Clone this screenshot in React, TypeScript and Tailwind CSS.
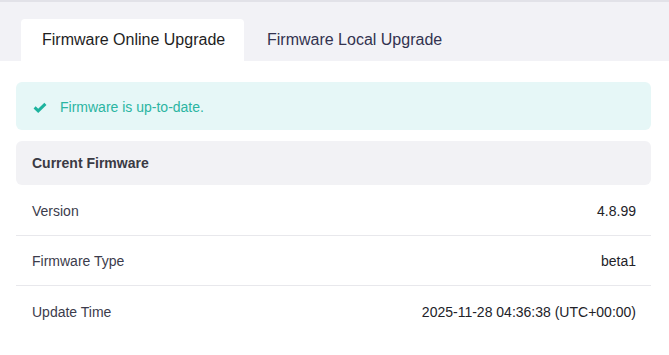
const rows = [
  { label: "Version", value: "4.8.99" },
  { label: "Firmware Type", value: "beta1" },
  { label: "Update Time", value: "2025-11-28 04:36:38 (UTC+00:00)" },
];

const CheckIcon = () => (
  <svg width="14" height="11" viewBox="0 0 14 11" fill="none">
    <path d="M1.6 5.4 L5.2 8.8 L12.4 1.8" stroke="#1db39e" strokeWidth="3" />
  </svg>
);

export default function App() {
  return (
    <div className="w-[669px] h-[355px] bg-white font-['Liberation_Sans'] overflow-hidden">
      <div className="h-[2px] bg-[#e2e2e8]" />
      <div className="flex items-end h-[59px] bg-[#f2f2f6] pl-[21px]">
        <div className="w-[223px] h-[42px] pl-[21px] flex items-center bg-white rounded-t-[4px] text-[16px] text-[#1e1e1e]">
          Firmware Online Upgrade
        </div>
        <div className="h-[42px] pl-[23px] flex items-center text-[16px] text-[#333350]">
          Firmware Local Upgrade
        </div>
      </div>

      <div className="px-[16px] w-[667px] pt-[21px]">
        <div className="h-[48px] rounded-[6px] bg-[#e6f7f7] flex items-center pt-[2px] pl-[17px] gap-[13px]">
          <CheckIcon />
          <span className="text-[14px] text-[#2bb5a2]">Firmware is up-to-date.</span>
        </div>

        <div className="mt-[11px] h-[44px] rounded-[6px] bg-[#f2f2f5] flex items-center px-[16px] pt-[1px]">
          <span className="text-[14px] font-bold text-[#3a3a44]">Current Firmware</span>
        </div>

        <div className="pt-[1px]">
          {rows.map((r, i) => (
            <div
              key={r.label}
              className={
                "h-[50px] flex items-center justify-between pl-[16px] pr-[15px] pt-[2px] text-[14px] " +
                (i < rows.length - 1 ? "border-b border-[#e8e8ec]" : "")
              }
            >
              <span className="text-[#3c3c4c]">{r.label}</span>
              <span className="text-[#222228]">{r.value}</span>
            </div>
          ))}
        </div>
      </div>
    </div>
  );
}
